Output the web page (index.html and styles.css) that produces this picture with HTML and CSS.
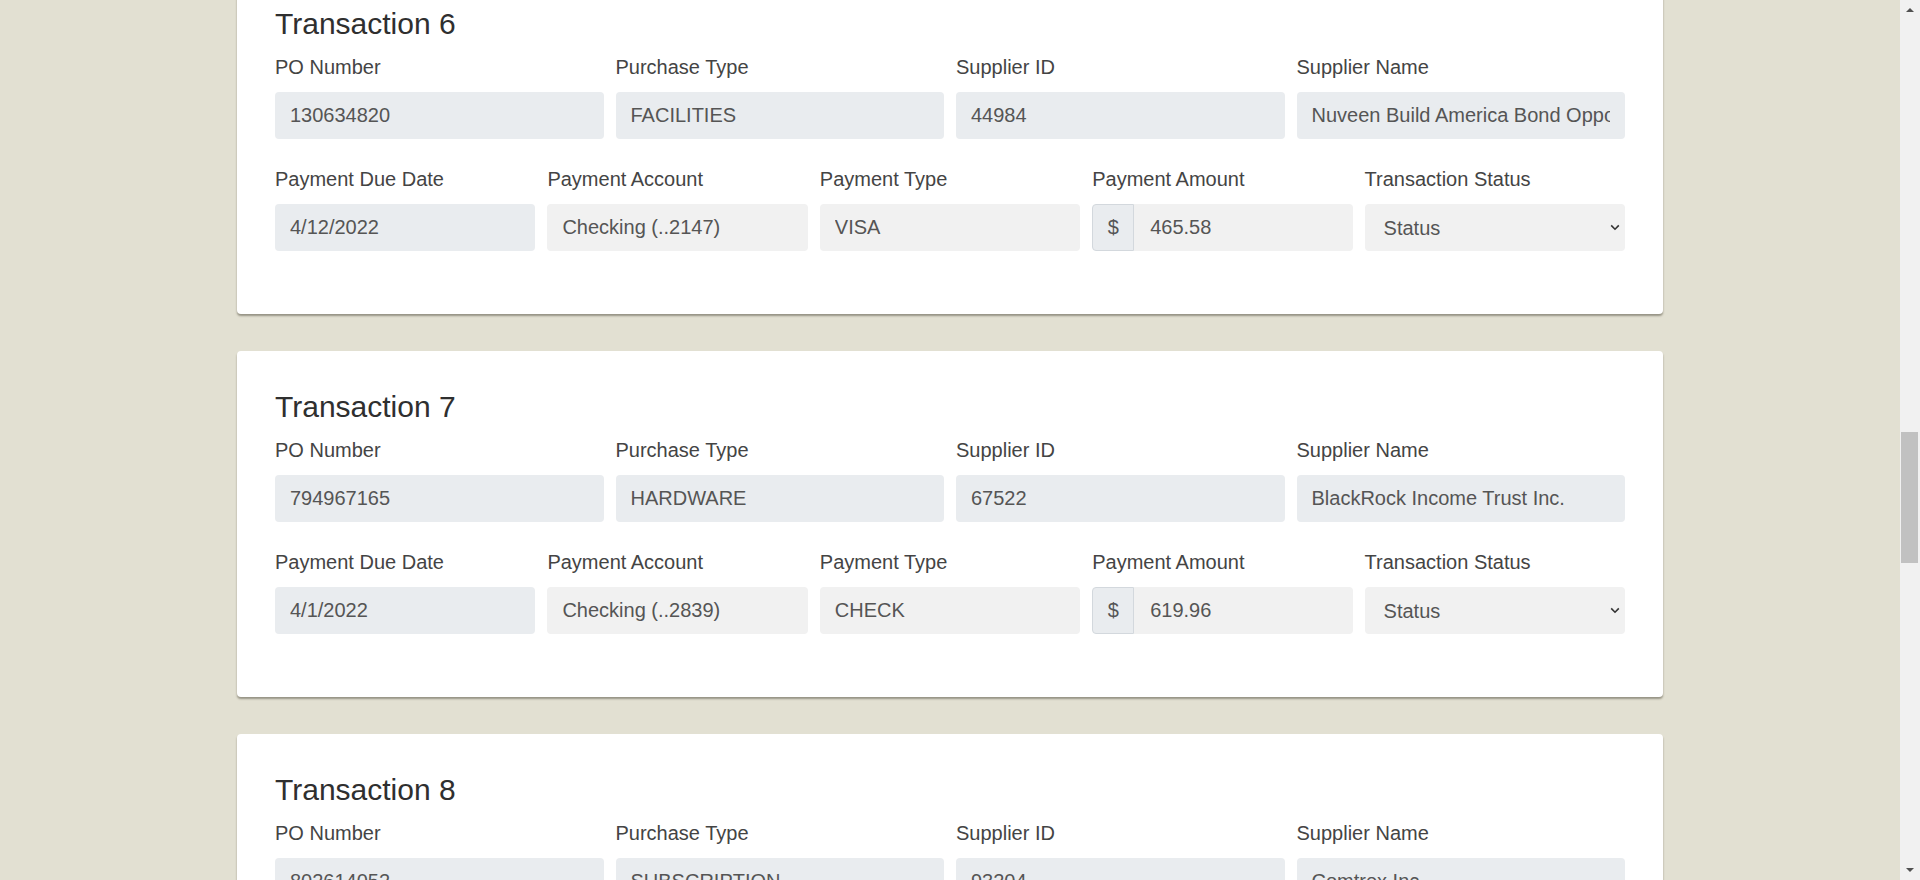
FILE: index.html
```html
<!DOCTYPE html>
<html lang="en">
<head>
<meta charset="utf-8">
<title>Transactions</title>
<link rel="stylesheet" href="styles.css">
</head>
<body>
<div class="window">
  <main class="page">
    <div class="cards">
      <section class="card">
        <h3 class="card-title">Transaction 6</h3>
        <div class="row row-4">
          <div class="field"><label class="field-label">PO Number</label><input class="field-input" readonly value="130634820"></div>
          <div class="field"><label class="field-label">Purchase Type</label><input class="field-input" readonly value="FACILITIES"></div>
          <div class="field"><label class="field-label">Supplier ID</label><input class="field-input" readonly value="44984"></div>
          <div class="field"><label class="field-label">Supplier Name</label><input class="field-input" readonly value="Nuveen Build America Bond Opportunity Fund"></div>
        </div>
        <div class="row row-5">
          <div class="field"><label class="field-label">Payment Due Date</label><input class="field-input" readonly value="4/12/2022"></div>
          <div class="field"><label class="field-label">Payment Account</label><input class="field-input plain" readonly value="Checking (..2147)"></div>
          <div class="field"><label class="field-label">Payment Type</label><input class="field-input plain" readonly value="VISA"></div>
          <div class="field"><label class="field-label">Payment Amount</label>
            <div class="input-group"><span class="addon">$</span><input class="field-input plain grouped" readonly value="465.58"></div>
          </div>
          <div class="field"><label class="field-label">Transaction Status</label>
            <div class="select-wrap">
              <select class="field-select"><option>Status</option><option>Approved</option><option>Pending</option></select>
              <svg class="chevron" width="10" height="7" viewBox="0 0 10 7"><path d="M1.2 1.4 L5 5.2 L8.8 1.4" fill="none" stroke="#333" stroke-width="1.6"/></svg>
            </div>
          </div>
        </div>
      </section>

      <section class="card">
        <h3 class="card-title">Transaction 7</h3>
        <div class="row row-4">
          <div class="field"><label class="field-label">PO Number</label><input class="field-input" readonly value="794967165"></div>
          <div class="field"><label class="field-label">Purchase Type</label><input class="field-input" readonly value="HARDWARE"></div>
          <div class="field"><label class="field-label">Supplier ID</label><input class="field-input" readonly value="67522"></div>
          <div class="field"><label class="field-label">Supplier Name</label><input class="field-input" readonly value="BlackRock Income Trust Inc."></div>
        </div>
        <div class="row row-5">
          <div class="field"><label class="field-label">Payment Due Date</label><input class="field-input" readonly value="4/1/2022"></div>
          <div class="field"><label class="field-label">Payment Account</label><input class="field-input plain" readonly value="Checking (..2839)"></div>
          <div class="field"><label class="field-label">Payment Type</label><input class="field-input plain" readonly value="CHECK"></div>
          <div class="field"><label class="field-label">Payment Amount</label>
            <div class="input-group"><span class="addon">$</span><input class="field-input plain grouped" readonly value="619.96"></div>
          </div>
          <div class="field"><label class="field-label">Transaction Status</label>
            <div class="select-wrap">
              <select class="field-select"><option>Status</option><option>Approved</option><option>Pending</option></select>
              <svg class="chevron" width="10" height="7" viewBox="0 0 10 7"><path d="M1.2 1.4 L5 5.2 L8.8 1.4" fill="none" stroke="#333" stroke-width="1.6"/></svg>
            </div>
          </div>
        </div>
      </section>

      <section class="card">
        <h3 class="card-title">Transaction 8</h3>
        <div class="row row-4">
          <div class="field"><label class="field-label">PO Number</label><input class="field-input" readonly value="802614052"></div>
          <div class="field"><label class="field-label">Purchase Type</label><input class="field-input" readonly value="SUBSCRIPTION"></div>
          <div class="field"><label class="field-label">Supplier ID</label><input class="field-input" readonly value="93204"></div>
          <div class="field"><label class="field-label">Supplier Name</label><input class="field-input" readonly value="Comtrex Inc."></div>
        </div>
        <div class="row row-5">
          <div class="field"><label class="field-label">Payment Due Date</label><input class="field-input" readonly value="4/20/2022"></div>
          <div class="field"><label class="field-label">Payment Account</label><input class="field-input plain" readonly value="Checking (..2147)"></div>
          <div class="field"><label class="field-label">Payment Type</label><input class="field-input plain" readonly value="ACH"></div>
          <div class="field"><label class="field-label">Payment Amount</label>
            <div class="input-group"><span class="addon">$</span><input class="field-input plain grouped" readonly value="212.40"></div>
          </div>
          <div class="field"><label class="field-label">Transaction Status</label>
            <div class="select-wrap">
              <select class="field-select"><option>Status</option><option>Approved</option><option>Pending</option></select>
              <svg class="chevron" width="10" height="7" viewBox="0 0 10 7"><path d="M1.2 1.4 L5 5.2 L8.8 1.4" fill="none" stroke="#333" stroke-width="1.6"/></svg>
            </div>
          </div>
        </div>
      </section>
    </div>
  </main>
  <div class="scrollbar" aria-hidden="true">
    <div class="sb-button"><span class="arrow-up"></span></div>
    <div class="sb-track"><div class="sb-thumb"></div></div>
    <div class="sb-button"><span class="arrow-down"></span></div>
  </div>
</div>
</body>
</html>
```
FILE: styles.css
```css
* { box-sizing: border-box; }

html, body {
  margin: 0;
  padding: 0;
  height: 880px;
  overflow: hidden;
}

body {
  font-family: "Liberation Sans", Arial, sans-serif;
  background: #e2e0d2;
  color: #333;
}

.window {
  display: flex;
  height: 880px;
}

.page {
  flex: 1;
  overflow: hidden;
}

.cards {
  width: 1426px;
  margin: -32px auto 0;
  display: flex;
  flex-direction: column;
  gap: 37px;
}

.card {
  background: #fff;
  border-radius: 4px;
  box-shadow: 0 2px 2px rgba(60, 55, 40, 0.45);
  padding: 39px 38px 63px;
}

.card-title {
  margin: 0 0 14px;
  font-size: 30px;
  line-height: 34px;
  font-weight: 400;
  color: #2f2f2f;
}

.row {
  display: grid;
  column-gap: 12px;
}

.row-4 { grid-template-columns: repeat(4, 1fr); margin-bottom: 28px; }
.row-5 { grid-template-columns: repeat(5, 1fr); }

.field {
  display: flex;
  flex-direction: column;
  min-width: 0;
}

.field-label {
  font-size: 20px;
  line-height: 24px;
  color: #444;
  margin-bottom: 13px;
}

.field-input {
  display: block;
  width: 100%;
  height: 47px;
  border: none;
  border-radius: 4px;
  background: #e9ecef;
  padding: 0 15px;
  font-family: "Liberation Sans", Arial, sans-serif;
  font-size: 20px;
  color: #555;
  outline: none;
}

.field-input.plain { background: #f1f1f1; }

.input-group {
  display: flex;
  height: 47px;
}

.addon {
  flex: 0 0 42px;
  display: flex;
  align-items: center;
  justify-content: center;
  background: #e9ecef;
  border: 1px solid #d3d8dd;
  border-radius: 4px 0 0 4px;
  font-size: 20px;
  color: #555;
}

.field-input.grouped {
  flex: 1;
  min-width: 0;
  border-radius: 0 4px 4px 0;
  padding-left: 16px;
}

.select-wrap {
  position: relative;
  height: 47px;
}

.field-select {
  -webkit-appearance: none;
  appearance: none;
  width: 100%;
  height: 47px;
  border: none;
  border-radius: 4px;
  background: #f1f1f1;
  padding: 0 30px 0 19px;
  font-family: "Liberation Sans", Arial, sans-serif;
  font-size: 20px;
  color: #555;
  outline: none;
}

.chevron {
  position: absolute;
  right: 5px;
  top: 20px;
  pointer-events: none;
}

/* fake classic scrollbar */
.scrollbar {
  flex: 0 0 20px;
  display: flex;
  flex-direction: column;
  background: #f1f1f1;
}

.sb-button {
  flex: 0 0 20px;
  display: flex;
  align-items: center;
  justify-content: center;
}

.arrow-up {
  width: 0; height: 0;
  border-left: 4px solid transparent;
  border-right: 4px solid transparent;
  border-bottom: 4px solid #505050;
}

.arrow-down {
  width: 0; height: 0;
  border-left: 4px solid transparent;
  border-right: 4px solid transparent;
  border-top: 4px solid #505050;
}

.sb-track {
  flex: 1;
  padding: 0 2px 0 1px;
}

.sb-thumb {
  margin-top: 412px;
  height: 131px;
  background: #c1c1c1;
}
```
